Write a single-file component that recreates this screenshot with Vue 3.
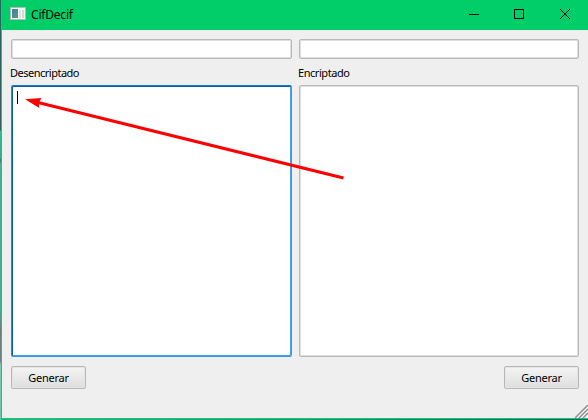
<script setup>
import { ref } from 'vue'

const panes = ref([
  { id: 'plain', label: 'Desencriptado', focused: true },
  { id: 'cipher', label: 'Encriptado', focused: false },
])
</script>

<template>
  <div class="desktop">
    <div class="edge"></div>
    <main class="window">
      <header class="titlebar">
        <svg class="app-icon" width="16" height="14" viewBox="0 0 16 14">
          <defs>
            <linearGradient id="pane" x1="0" y1="0" x2="1" y2="1">
              <stop offset="0" stop-color="#477bb5" />
              <stop offset="1" stop-color="#4ba06a" />
            </linearGradient>
          </defs>
          <rect x=".5" y=".5" width="15" height="12" fill="#f4f4f4" stroke="#b3b9b5" />
          <rect x="2" y="2" width="6" height="9" fill="url(#pane)" />
          <rect x="9" y="3" width="2" height="8" fill="#e0e2e4" />
          <rect x="12" y="3" width="2" height="8" fill="#cfdcd8" />
        </svg>
        <h1 class="title">CifDecif</h1>
        <div class="controls">
          <svg width="10" height="10" viewBox="0 0 10 10"><path d="M0 5.5H10" /></svg>
          <svg width="10" height="10" viewBox="0 0 10 10"><path d="M.5 .5H9.5V9.5H.5Z" /></svg>
          <svg width="10" height="10" viewBox="0 0 10 10"><path d="M0 0L10 10M10 0L0 10" /></svg>
        </div>
      </header>
      <section class="panes">
        <div v-for="p in panes" :key="p.id" class="pane">
          <div class="field"></div>
          <div class="label" :class="p.id">{{ p.label }}</div>
          <div class="editor" :class="{ focused: p.focused }">
            <span v-if="p.focused" class="caret"></span>
          </div>
        </div>
      </section>
      <footer class="actions">
        <button>Generar</button>
        <button>Generar</button>
      </footer>
      <svg class="grip" width="13" height="13" viewBox="0 0 13 13">
        <path d="M1.5 13L13.5 1M5.5 13L13.5 5M9.5 13L13.5 9" stroke="#fff" stroke-width="1" transform="translate(1 0)" />
        <path d="M0 13L13 0M4 13L13 4M8 13L13 8" stroke="#909090" stroke-width="1.5" />
      </svg>
    </main>
    <svg class="arrow" width="588" height="420" viewBox="0 0 588 420">
      <path d="M343.5 178L38 102.5" stroke="#fe0000" stroke-width="3" />
      <path d="M25 99.3L41.5 98L38.7 102.7L39.3 108Z" fill="#fe0000" />
    </svg>
  </div>
</template>

<style>
body {
  margin: 0;
  overflow: hidden;
}
</style>

<style scoped>
.desktop {
  position: relative;
  display: flex;
  width: 588px;
  height: 420px;
  background: linear-gradient(90deg, #2fae82, #1d9b78 50%, #0b5f58);
  font-family: "Noto Sans", "Open Sans", sans-serif;
  font-size: 11px;
  color: #000;
}
.edge {
  width: 1px;
  background: linear-gradient(#1d6b5d 0, #35605f 130px, #2fbf8f 131px, #38a888 158px, #3b7068 160px, #43b48e 164px, #3fae8a 310px, #66807e 330px, #6c8583 362px, #7cc9b4 364px, #68c4a8 420px);
}
.window {
  position: relative;
  box-sizing: border-box;
  display: flex;
  flex-direction: column;
  width: 587px;
  height: 419px;
  border-left: 1px solid #17c877;
  border-bottom: 1px solid #0bcb71;
  background: #efefef;
}
.titlebar {
  display: flex;
  align-items: center;
  height: 30px;
  padding: 0 18px 0 8px;
  box-sizing: border-box;
  background: #02ce69;
}
.app-icon {
  margin-bottom: 2px;
}
.title {
  margin: 0 0 0 5px;
  font-size: 12px;
  font-weight: 400;
  line-height: 16px;
  letter-spacing: -0.2px;
}
.controls {
  display: flex;
  gap: 35px;
  margin-left: auto;
  padding: 0 0 2px;
}
.controls svg {
  fill: none;
  stroke: #000;
  stroke-width: 1;
}
.controls svg:nth-child(2) {
  margin-right: 1px;
}
.controls svg:first-child {
  margin-right: 0;
}
.panes {
  display: grid;
  grid-template-columns: 281px 280px;
  column-gap: 7px;
  padding: 9px 0 0 9px;
}
.field,
.editor {
  box-sizing: border-box;
  border: 1px solid #b9b9b9;
  border-radius: 2px;
  background: #fff;
  box-shadow: inset 0 0 0 1px #dedede;
}
.field {
  height: 20px;
}
.label {
  height: 26px;
  margin-left: -1px;
  line-height: 27px;
  letter-spacing: -0.5px;
}
.label.cipher {
  letter-spacing: -0.45px;
}
.editor {
  height: 272px;
  padding: 5px;
}
.editor.focused {
  border-color: #1a76c2 #3d98e0 #3494df #2b86d0;
  box-shadow: inset 1px 1px 0 #0561ad, inset -1px -1px 0 #4aa3e5;
}
.caret {
  display: block;
  width: 1px;
  height: 13px;
  background: #000;
}
.actions {
  display: flex;
  justify-content: space-between;
  padding: 9px 9px 0 9px;
}
button {
  box-sizing: border-box;
  width: 75px;
  height: 23px;
  padding: 0;
  border: 1px solid #b7b7b7;
  border-radius: 2px;
  background: linear-gradient(#f4f4f4, #dedede);
  box-shadow: inset 0 0 0 1px #e5e5e5;
  color: #000;
  font: inherit;
  line-height: 20px;
  letter-spacing: -0.25px;
}
.grip {
  position: absolute;
  right: 0;
  bottom: 0;
}
.arrow {
  position: absolute;
  left: 0;
  top: 0;
  pointer-events: none;
}
</style>
